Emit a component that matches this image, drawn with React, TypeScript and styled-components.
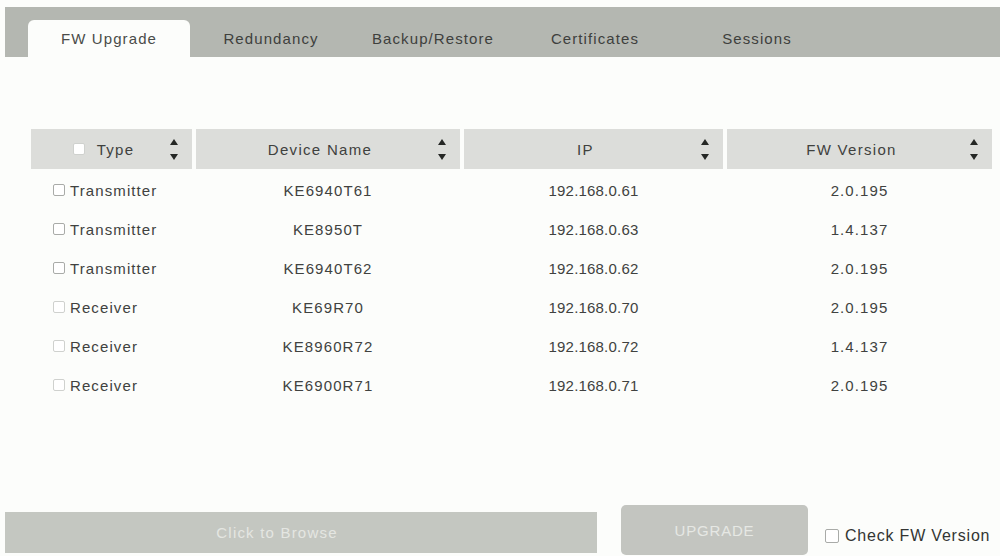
import React from "react";
import styled, { createGlobalStyle } from "styled-components";

const Global = createGlobalStyle`
  html, body { margin: 0; padding: 0; background: #fcfdfb; }
  body { font-family: "Liberation Sans", Arial, sans-serif; color: #3d3f3c; }
`;

const Page = styled.div`
  width: 1000px;
  height: 556px;
  padding-top: 7px;
  box-sizing: border-box;
  display: flex;
  flex-direction: column;
  overflow: hidden;
`;

const TabBar = styled.div`
  margin-left: 5px;
  height: 50px;
  background: #b4b7b1;
  display: flex;
  align-items: flex-end;
  padding-left: 23px;
`;

const Tab = styled.div<{ $active?: boolean }>`
  width: 162px;
  height: 37px;
  display: flex;
  align-items: center;
  justify-content: center;
  font-size: 15px;
  letter-spacing: 1.1px;
  color: ${(p) => (p.$active ? "#4a4c49" : "#3e403d")};
  background: ${(p) => (p.$active ? "#fcfdfb" : "transparent")};
  border-radius: 6px 6px 0 0;
`;

const Table = styled.div`
  margin: 72px 0 0 31px;
  width: 961px;
`;

const cols = "161px 264px 259px 265px";

const HeadRow = styled.div`
  display: grid;
  grid-template-columns: ${cols};
  column-gap: 4px;
  height: 40px;
`;

const HeadCell = styled.div`
  background: #dcddda;
  display: grid;
  grid-template-columns: 14px 1fr 30px;
  align-items: center;
  font-size: 15px;
  letter-spacing: 1.3px;
  color: #3f413e;
`;

const HeadLabel = styled.div`
  grid-column: 2;
  display: flex;
  align-items: center;
  justify-content: center;
  gap: 12px;
`;

const Arrows = styled.div`
  grid-column: 3;
  display: flex;
  flex-direction: column;
  align-items: center;
  gap: 9px;
  padding-right: 6px;
`;

const Tri = styled.div<{ $down?: boolean }>`
  width: 0;
  height: 0;
  border-left: 4.5px solid transparent;
  border-right: 4.5px solid transparent;
  ${(p) => (p.$down ? "border-top: 6px solid #252725;" : "border-bottom: 6px solid #252725;")}
`;

const Row = styled.div`
  display: grid;
  grid-template-columns: ${cols};
  column-gap: 4px;
  height: 39px;
  box-sizing: border-box;
  padding-top: 3px;
  align-items: center;
  font-size: 15px;
  letter-spacing: 1.1px;
  color: #404240;
`;

const TypeCell = styled.div`
  display: flex;
  align-items: center;
  gap: 5px;
  padding-left: 22px;
`;

const Center = styled.div<{ $tight?: boolean }>`
  text-align: center;
  ${(p) => (p.$tight ? "letter-spacing: 0.2px;" : "")}
`;

const Box = styled.span<{ $light?: boolean; $size?: number }>`
  display: inline-block;
  width: ${(p) => p.$size ?? 10}px;
  height: ${(p) => p.$size ?? 10}px;
  border: 1px solid ${(p) => (p.$light ? "#cfd1ce" : "#a9aba8")};
  border-radius: 2px;
  background: #fff;
`;

const Footer = styled.div`
  margin-top: auto;
  margin-left: 5px;
  height: 51px;
  display: flex;
  align-items: flex-start;
`;

const Browse = styled.div`
  margin-top: 7px;
  width: 592px;
  height: 41px;
  box-sizing: border-box;
  padding-right: 48px;
  background: #c4c7c1;
  color: #e4e6e2;
  font-size: 15px;
  letter-spacing: 1.2px;
  display: flex;
  align-items: center;
  justify-content: center;
`;

const UpgradeBtn = styled.div`
  margin-left: 24px;
  width: 187px;
  height: 50px;
  border-radius: 5px;
  background: #c3c5c0;
  color: #e6e8e4;
  font-size: 15px;
  letter-spacing: 0.8px;
  display: flex;
  align-items: center;
  justify-content: center;
`;

const Check = styled.label`
  margin: 22px 0 0 17px;
  display: flex;
  align-items: center;
  gap: 6px;
  font-size: 16px;
  letter-spacing: 0.8px;
  color: #333533;
  white-space: nowrap;
`;

const tabs = ["FW Upgrade", "Redundancy", "Backup/Restore", "Certificates", "Sessions"];

const rows = [
  ["Transmitter", "KE6940T61", "192.168.0.61", "2.0.195"],
  ["Transmitter", "KE8950T", "192.168.0.63", "1.4.137"],
  ["Transmitter", "KE6940T62", "192.168.0.62", "2.0.195"],
  ["Receiver", "KE69R70", "192.168.0.70", "2.0.195"],
  ["Receiver", "KE8960R72", "192.168.0.72", "1.4.137"],
  ["Receiver", "KE6900R71", "192.168.0.71", "2.0.195"],
];

const Sort = () => (
  <Arrows>
    <Tri />
    <Tri $down />
  </Arrows>
);

export default function App() {
  return (
    <Page>
      <Global />
      <TabBar>
        {tabs.map((t, i) => (
          <Tab key={t} $active={i === 0}>
            {t}
          </Tab>
        ))}
      </TabBar>
      <Table>
        <HeadRow>
          <HeadCell>
            <HeadLabel>
              <Box $light />
              <span>Type</span>
            </HeadLabel>
            <Sort />
          </HeadCell>
          <HeadCell>
            <HeadLabel>Device Name</HeadLabel>
            <Sort />
          </HeadCell>
          <HeadCell>
            <HeadLabel>IP</HeadLabel>
            <Sort />
          </HeadCell>
          <HeadCell>
            <HeadLabel>FW Version</HeadLabel>
            <Sort />
          </HeadCell>
        </HeadRow>
        {rows.map((r, i) => (
          <Row key={i}>
            <TypeCell>
              <Box $light={r[0] === "Receiver"} />
              <span>{r[0]}</span>
            </TypeCell>
            <Center>{r[1]}</Center>
            <Center $tight>{r[2]}</Center>
            <Center>{r[3]}</Center>
          </Row>
        ))}
      </Table>
      <Footer>
        <Browse>Click to Browse</Browse>
        <UpgradeBtn>UPGRADE</UpgradeBtn>
        <Check>
          <Box $size={12} />
          <span>Check FW Version</span>
        </Check>
      </Footer>
    </Page>
  );
}
